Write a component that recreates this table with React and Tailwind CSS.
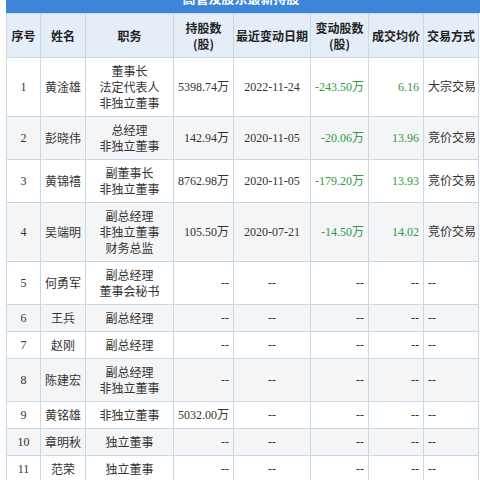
const rows = [
  ["1", "黄淦雄", ["董事长", "法定代表人", "非独立董事"], "5398.74万", "2022-11-24", "-243.50万", "6.16", "大宗交易"],
  ["2", "彭晓伟", ["总经理", "非独立董事"], "142.94万", "2020-11-05", "-20.06万", "13.96", "竞价交易"],
  ["3", "黄锦禧", ["副董事长", "非独立董事"], "8762.98万", "2020-11-05", "-179.20万", "13.93", "竞价交易"],
  ["4", "吴端明", ["副总经理", "非独立董事", "财务总监"], "105.50万", "2020-07-21", "-14.50万", "14.02", "竞价交易"],
  ["5", "何勇军", ["副总经理", "董事会秘书"], "--", "--", "--", "--", "--"],
  ["6", "王兵", ["副总经理"], "--", "--", "--", "--", "--"],
  ["7", "赵刚", ["副总经理"], "--", "--", "--", "--", "--"],
  ["8", "陈建宏", ["副总经理", "非独立董事"], "--", "--", "--", "--", "--"],
  ["9", "黄铭雄", ["非独立董事"], "5032.00万", "--", "--", "--", "--"],
  ["10", "章明秋", ["独立董事"], "--", "--", "--", "--", "--"],
  ["11", "范荣", ["独立董事"], "--", "--", "--", "--", "--"],
];

const cell = "border border-[#c9d8e8] px-[4px] py-[5px] align-middle whitespace-nowrap";
const head = "border border-[#c9d8e8] px-0 py-[5px] align-middle whitespace-nowrap text-center";

export default function App() {
  return (
    <div className="w-[480px] h-[480px] overflow-hidden bg-white pl-[6px] text-[12px] leading-[16px] text-[#333]" style={{ fontFamily: '"Liberation Serif", "Noto Sans CJK SC", serif' }}>
      <div className="h-[13px] overflow-hidden bg-[#3d85d6] text-center text-white font-bold text-[13px]" style={{ fontFamily: '"Noto Sans CJK SC", sans-serif' }}>
        <div className="mt-[-10px] leading-[16px] pr-[4px]">高管及股东最新持股</div>
      </div>
      <table className="border-collapse w-[472px] table-fixed">
        <colgroup>
          <col className="w-[34px]" />
          <col className="w-[45px]" />
          <col className="w-[88px]" />
          <col className="w-[60px]" />
          <col className="w-[77px]" />
          <col className="w-[58px]" />
          <col className="w-[55px]" />
          <col className="w-[55px]" />
        </colgroup>
        <thead>
          <tr className="bg-[#e4edf8] font-bold text-[#222] h-[44px]" style={{ fontFamily: '"Noto Sans CJK SC", sans-serif' }}>
            <th className={head}>序号</th>
            <th className={head}>姓名</th>
            <th className={head}>职务</th>
            <th className={head}>持股数<br />(股)</th>
            <th className={head}>最近变动日期</th>
            <th className={head}>变动股数<br />(股)</th>
            <th className={head}>成交均价</th>
            <th className={head}>交易方式</th>
          </tr>
        </thead>
        <tbody>
          {rows.map((r, i) => (
            <tr key={r[0]} className={i % 2 === 1 ? "bg-[#f4f5f7]" : "bg-white"}>
              <td className={cell + " text-center"}>{r[0]}</td>
              <td className={cell + " text-center"} style={{ fontFamily: '"Noto Sans CJK SC", sans-serif' }}>{r[1]}</td>
              <td className={cell + " text-center"} style={{ fontFamily: '"Noto Sans CJK SC", sans-serif' }}>
                {r[2].map((t) => (
                  <div key={t}>{t}</div>
                ))}
              </td>
              <td className={cell + " text-right"}>{r[3]}</td>
              <td className={cell + " text-center"}>{r[4]}</td>
              <td className={cell + " text-right " + (r[5] === "--" ? "" : "text-[#2f9a3f]")}>{r[5]}</td>
              <td className={cell + " text-right " + (r[6] === "--" ? "" : "text-[#2f9a3f]")}>{r[6]}</td>
              <td className={cell + " text-left"}>{r[7]}</td>
            </tr>
          ))}
        </tbody>
      </table>
    </div>
  );
}
